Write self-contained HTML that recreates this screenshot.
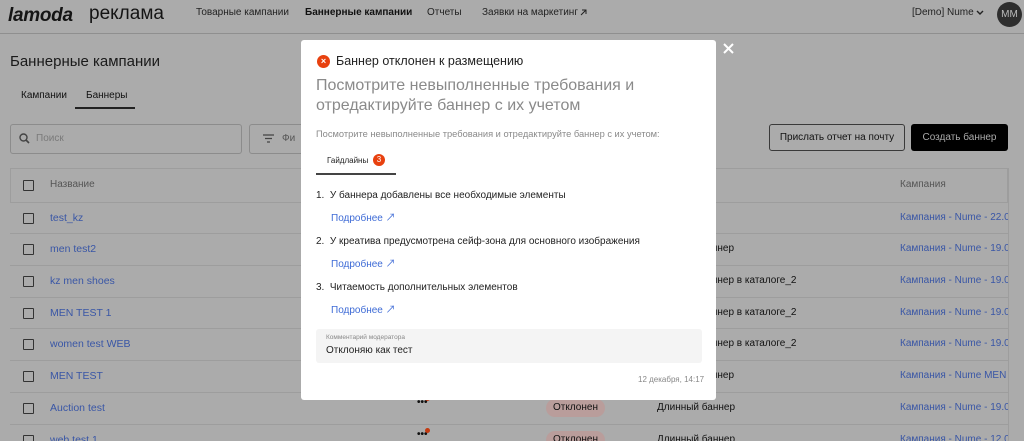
<!DOCTYPE html>
<html><head><meta charset="utf-8"><style>
*{box-sizing:border-box;margin:0;padding:0}
html{width:1024px;height:441px;overflow:hidden}
body{width:1024px;height:441px;overflow:hidden;background:#ababab;font-family:"Liberation Sans","Noto Sans CJK SC",sans-serif;color:#111;position:relative}
.abs{position:absolute;white-space:nowrap}
.hdr{position:absolute;left:0;top:0;width:1024px;height:34px;border-bottom:1px solid #8f8f8f}
.nav{font-size:10px;top:7px}
.row{position:absolute;left:10px;width:998px;height:32px;border-top:1px solid #9d9d9d}
.cb{position:absolute;left:13px;width:11px;height:11px;border:1.3px solid #333;border-radius:1px}
.row .n{position:absolute;left:40px;top:9px;font-size:10.5px;color:#3956a6;white-space:nowrap}
.row .c{position:absolute;left:890px;top:9px;font-size:10px;color:#3956a6;white-space:nowrap;width:108px;overflow:hidden}
.row .t{position:absolute;left:646px;top:9px;font-size:10px;color:#111;white-space:nowrap}
.modal{position:absolute;left:301px;top:40px;width:415px;height:360px;background:#fff;border-radius:3px}
.m{position:absolute;white-space:nowrap}
</style></head><body>
<div class="hdr"></div>
<div class="abs" style="left:8px;top:5px;font-size:19px;font-weight:bold;font-style:italic;letter-spacing:-0.3px;color:#141414">lamoda</div>
<div class="abs" style="left:89px;top:3px;font-size:19px;color:#141414">реклама</div>
<div class="abs nav" style="left:196px;color:#222">Товарные кампании</div>
<div class="abs nav" style="left:305px;font-weight:bold">Баннерные кампании</div>
<div class="abs nav" style="left:427px;color:#222">Отчеты</div>
<div class="abs nav" style="left:482px;color:#222">Заявки на маркетинг</div>
<svg class="abs" style="left:580px;top:9px" width="7" height="7" viewBox="0 0 7 7"><path d="M1 6L6 1M2 1H6V5" stroke="#222" fill="none"/></svg>
<div class="abs nav" style="left:912px;color:#222">[Demo] Nume</div>
<svg class="abs" style="left:976px;top:10px" width="8" height="6" viewBox="0 0 8 6"><path d="M1 1L4 4L7 1" stroke="#222" stroke-width="1.4" fill="none"/></svg>
<div class="abs" style="left:997px;top:2px;width:25px;height:25px;border-radius:50%;background:#2e2e2e;color:#bbb;font-size:10px;text-align:center;line-height:25px">MM</div>

<div class="abs" style="left:10px;top:53px;font-size:15px;color:#1a1a1a">Баннерные кампании</div>
<div class="abs" style="left:21px;top:90px;font-size:10px">Кампании</div>
<div class="abs" style="left:86px;top:90px;font-size:10px">Баннеры</div>
<div class="abs" style="left:75px;top:107px;width:60px;height:2px;background:#222"></div>
<div class="abs" style="left:10px;top:124px;width:232px;height:30px;border:1px solid #8c8c8c;border-radius:3px"></div>
<svg class="abs" style="left:19px;top:133px" width="11" height="11" viewBox="0 0 11 11"><circle cx="4.5" cy="4.5" r="3.5" stroke="#444" stroke-width="1.4" fill="none"/><path d="M7 7L10 10" stroke="#444" stroke-width="1.6"/></svg>
<div class="abs" style="left:36px;top:133px;font-size:10px;color:#7a7a7a">Поиск</div>
<div class="abs" style="left:249px;top:124px;width:60px;height:30px;border:1px solid #8c8c8c;border-radius:3px"></div>
<svg class="abs" style="left:263px;top:134px" width="11" height="9" viewBox="0 0 11 9"><path d="M0 1H11M2 4.5H9M4 8H7" stroke="#444" stroke-width="1.2"/></svg>
<div class="abs" style="left:282px;top:133px;font-size:10px;color:#555">Фи</div>
<div class="abs" style="left:769px;top:124px;width:136px;height:27px;border:1px solid #3a3a3a;border-radius:3px;font-size:10px;text-align:center;line-height:25px">Прислать отчет на почту</div>
<div class="abs" style="left:911px;top:124px;width:97px;height:27px;background:#000;border-radius:3px;font-size:10px;color:#aaa;text-align:center;line-height:27px">Создать баннер</div>

<div class="abs" style="left:10px;top:168px;width:998px;height:34px;border:1px solid #9d9d9d;border-bottom:none"></div>
<div class="abs cb" style="left:23px;top:180px"></div>
<div class="abs" style="left:50px;top:179px;font-size:10px;color:#555">Название</div>
<div class="abs" style="left:900px;top:179px;font-size:10px;color:#555">Кампания</div>
<div class="abs" style="left:1008px;top:168px;width:1px;height:273px;background:#9d9d9d"></div>

<div class="row" style="top:202px"><div class="cb" style="top:10px"></div><div class="n">test_kz</div><div class="c">Кампания - Nume - 22.0</div></div>
<div class="row" style="top:233px"><div class="cb" style="top:10px"></div><div class="n">men test2</div><div class="t">Длинный баннер</div><div class="c">Кампания - Nume - 19.0</div></div>
<div class="row" style="top:265px"><div class="cb" style="top:10px"></div><div class="n">kz men shoes</div><div class="t">Длинный баннер в каталоге_2</div><div class="c">Кампания - Nume - 19.0</div></div>
<div class="row" style="top:297px"><div class="cb" style="top:10px"></div><div class="n">MEN TEST 1</div><div class="t">Длинный баннер в каталоге_2</div><div class="c">Кампания - Nume - 19.0</div></div>
<div class="row" style="top:328px"><div class="cb" style="top:10px"></div><div class="n">women test WEB</div><div class="t">Длинный баннер в каталоге_2</div><div class="c">Кампания - Nume - 19.0</div></div>
<div class="row" style="top:360px"><div class="cb" style="top:10px"></div><div class="n">MEN TEST</div><div class="t">Длинный баннер</div><div class="c">Кампания - Nume MEN</div></div>
<div class="row" style="top:392px"><div class="cb" style="top:10px"></div><div class="n">Auction test</div><div class="t" style="left:647px">Длинный баннер</div><div class="c">Кампания - Nume - 19.0</div>
<div class="abs" style="left:536px;top:6px;width:59px;height:18px;border-radius:9px;background:#b99d9b;font-size:10px;text-align:center;line-height:18px">Отклонен</div>
<div class="abs" style="left:407px;top:4px;font-size:10px;font-weight:bold">•••</div><div class="abs" style="left:415px;top:3px;width:5px;height:5px;border-radius:50%;background:#c33a10"></div></div>
<div class="row" style="top:424px"><div class="cb" style="top:10px"></div><div class="n">web test 1</div><div class="t" style="left:647px">Длинный баннер</div><div class="c">Кампания - Nume - 12.0</div>
<div class="abs" style="left:536px;top:6px;width:59px;height:18px;border-radius:9px;background:#b99d9b;font-size:10px;text-align:center;line-height:18px">Отклонен</div>
<div class="abs" style="left:407px;top:4px;font-size:10px;font-weight:bold">•••</div><div class="abs" style="left:415px;top:3px;width:5px;height:5px;border-radius:50%;background:#c33a10"></div></div>

<svg class="abs" style="left:723px;top:43px" width="11" height="11" viewBox="0 0 11 11"><path d="M1 1L10 10M10 1L1 10" stroke="#fff" stroke-width="2"/></svg>

<div class="modal">
<div class="m" style="left:16px;top:15px;width:13px;height:13px;border-radius:50%;background:#e8410f;color:#fff;font-size:9px;font-weight:bold;text-align:center;line-height:13px">×</div>
<div class="m" style="left:35px;top:14px;font-size:12.5px;color:#222">Баннер отклонен к размещению</div>
<div class="m" style="left:15px;top:36px;font-size:16px;color:#8a8a8a;line-height:20px">Посмотрите невыполненные требования и<br>отредактируйте баннер с их учетом</div>
<div class="m" style="left:15px;top:89px;font-size:9.3px;color:#8a8a8a">Посмотрите невыполненные требования и отредактируйте баннер с их учетом:</div>
<div class="m" style="left:26px;top:116px;font-size:8px;color:#222">Гайдлайны</div>
<div class="m" style="left:72px;top:114px;width:12px;height:12px;border-radius:50%;background:#e8410f;color:#fff;font-size:8px;text-align:center;line-height:12px">3</div>
<div class="m" style="left:15px;top:133px;width:80px;height:2px;background:#444"></div>
<div class="m" style="left:15px;top:150px;font-size:10px;color:#222">1.&nbsp; У баннера добавлены все необходимые элементы</div>
<div class="m" style="left:30px;top:169px;font-size:10px;color:#3e6bd6">Подробнее ↗</div>
<div class="m" style="left:15px;top:196px;font-size:10px;color:#222">2.&nbsp; У креатива предусмотрена сейф-зона для основного изображения</div>
<div class="m" style="left:30px;top:215px;font-size:10px;color:#3e6bd6">Подробнее ↗</div>
<div class="m" style="left:15px;top:242px;font-size:10px;color:#222">3.&nbsp; Читаемость дополнительных элементов</div>
<div class="m" style="left:30px;top:261px;font-size:10px;color:#3e6bd6">Подробнее ↗</div>
<div class="m" style="left:15px;top:289px;width:386px;height:34px;background:#f4f4f4;border-radius:3px"></div>
<div class="m" style="left:25px;top:294px;font-size:6.5px;color:#888">Комментарий модератора</div>
<div class="m" style="left:25px;top:305px;font-size:10px;color:#222">Отклоняю как тест</div>
<div class="m" style="left:337px;top:335px;font-size:8px;color:#888">12 декабря, 14:17</div>
</div>
</body></html>
